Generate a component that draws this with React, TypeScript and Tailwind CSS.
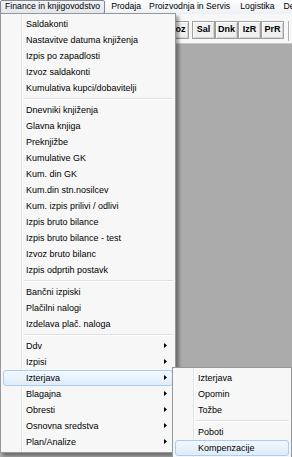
import React from "react";

type Item = { label: string; arrow?: boolean; active?: boolean };

const mainGroups: Item[][] = [
  [
    { label: "Saldakonti" },
    { label: "Nastavitve datuma knjiženja" },
    { label: "Izpis po zapadlosti" },
    { label: "Izvoz saldakonti" },
    { label: "Kumulativa kupci/dobavitelji" },
  ],
  [
    { label: "Dnevniki knjiženja" },
    { label: "Glavna knjiga" },
    { label: "Preknjižbe" },
    { label: "Kumulative GK" },
    { label: "Kum. din GK" },
    { label: "Kum.din stn.nosilcev" },
    { label: "Kum. izpis prilivi / odlivi" },
    { label: "Izpis bruto bilance" },
    { label: "Izpis bruto bilance - test" },
    { label: "Izvoz bruto bilanc" },
    { label: "Izpis odprtih postavk" },
  ],
  [
    { label: "Bančni izpiski" },
    { label: "Plačilni nalogi" },
    { label: "Izdelava plač. naloga" },
  ],
  [
    { label: "Ddv", arrow: true },
    { label: "Izpisi", arrow: true },
    { label: "Izterjava", arrow: true, active: true },
    { label: "Blagajna", arrow: true },
    { label: "Obresti", arrow: true },
    { label: "Osnovna sredstva", arrow: true },
    { label: "Plan/Analize", arrow: true },
  ],
];

const subGroups: Item[][] = [
  [{ label: "Izterjava" }, { label: "Opomin" }, { label: "Tožbe" }],
  [{ label: "Poboti" }, { label: "Kompenzacije", active: true }],
];

function MenuRow({ item }: { item: Item }) {
  return (
    <div
      className={
        "relative mx-[2px] h-[16px] rounded-[3px] border pl-[22px] leading-[14px] whitespace-nowrap " +
        (item.active
          ? "border-[#a9cdf3] bg-gradient-to-b from-[#f3f8fe] to-[#dfecfb]"
          : "border-transparent")
      }
    >
      {item.label}
      {item.arrow && (
        <svg
          className="absolute right-[5px] top-[4px]"
          width="3"
          height="5"
          viewBox="0 0 3 5"
        >
          <polygon points="0,0 3,2.5 0,5" fill="#000" />
        </svg>
      )}
    </div>
  );
}

function Separator() {
  return (
    <div className="ml-[23px] mr-[2px] flex h-[6px] flex-col justify-center">
      <div className="h-px bg-[#e0e0e0]" />
      <div className="h-px bg-white" />
    </div>
  );
}

function Menu({ groups, className }: { groups: Item[][]; className: string }) {
  return (
    <div
      className={
        "absolute border border-[#979797] bg-[#f7f7f7] pt-[2px] pb-[2px] shadow-[3px_3px_3px_rgba(0,0,0,0.35)] " +
        className
      }
    >
      <div className="absolute left-[20px] top-0 bottom-0 w-px bg-[#e2e3e3]" />
      <div className="absolute left-[21px] top-0 bottom-0 w-px bg-white" />
      {groups.map((g, gi) => (
        <React.Fragment key={gi}>
          {gi > 0 && <Separator />}
          {g.map((it) => (
            <MenuRow key={it.label} item={it} />
          ))}
        </React.Fragment>
      ))}
    </div>
  );
}

function ToolButton({ label }: { label: string }) {
  return (
    <div className="flex h-[18px] w-[23px] items-center justify-center border border-[#a0a0a0] bg-[#f0f0f0] text-[9px] font-bold shadow-[inset_1px_1px_0_#ffffff,inset_-1px_-1px_0_#d4d4d4]">
      {label}
    </div>
  );
}

export default function App() {
  return (
    <div className="relative flex h-[457px] w-[292px] flex-col overflow-hidden bg-[#ababab] font-['Liberation_Sans',Arial,sans-serif] text-[9px] text-[#000]">
      {/* Menu bar */}
      <div className="flex h-[14px] shrink-0 items-stretch overflow-hidden bg-gradient-to-b from-[#fdfdfe] to-[#edf1f7] text-[8.7px] whitespace-nowrap">
        <div className="flex items-center rounded-[2px] border border-[#7f8893] bg-gradient-to-b from-[#f1f3f6] to-[#e3e7ec] px-[4px]">
          Finance in knjigovodstvo
        </div>
        <div className="flex items-center pl-[6px] pr-[4px]">Prodaja</div>
        <div className="flex items-center pl-[4px] pr-[5px]">Proizvodnja in Servis</div>
        <div className="flex items-center pl-[5px] pr-[4px]">Logistika</div>
        <div className="flex items-center pl-[5px]">De</div>
      </div>

      {/* Toolbar */}
      <div className="flex h-[30px] shrink-0 items-start border-b border-[#c8c8c8] bg-[#f7f7f7] pl-[166px] pt-[7px]">
        <ToolButton label="Poz" />
        <div className="w-[3px]" />
        <ToolButton label="Sal" />
        <ToolButton label="Dnk" />
        <ToolButton label="IzR" />
        <ToolButton label="PrR" />
        <div className="ml-[4px] h-[20px] w-px bg-[#b0b0b0]" />
      </div>

      {/* MDI area */}
      <div className="flex-1 bg-[#ababab]" />

      {/* Dropdown */}
      <Menu groups={mainGroups} className="left-0 top-[13px] w-[176px]" />
      <Menu groups={subGroups} className="left-[172px] top-[367px] w-[120px]" />
    </div>
  );
}
